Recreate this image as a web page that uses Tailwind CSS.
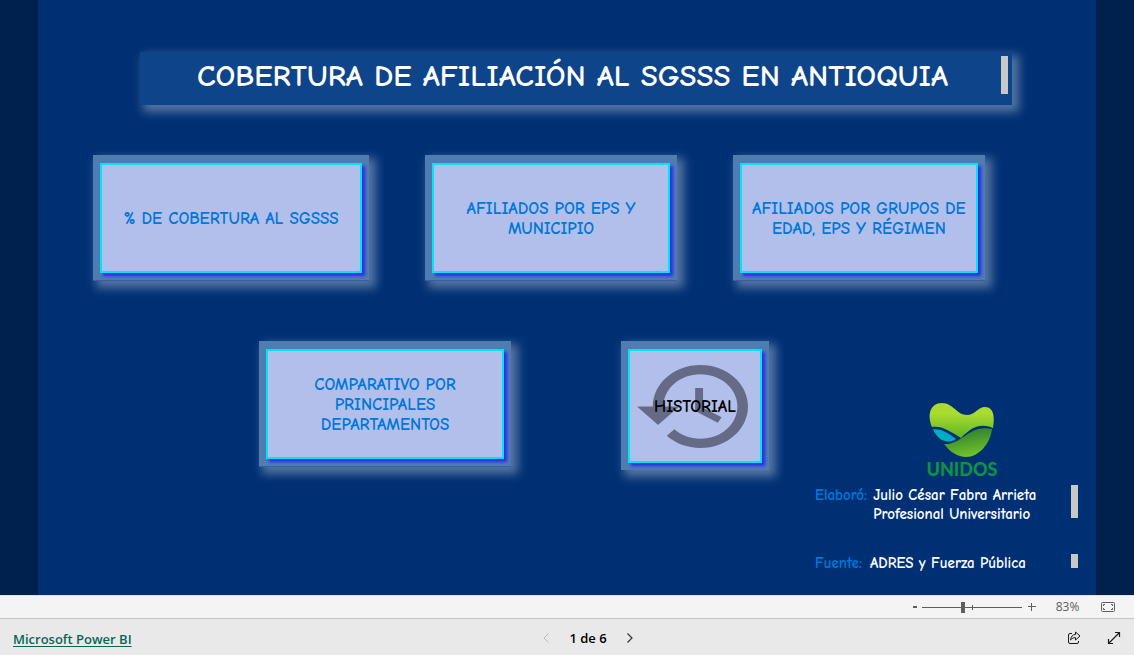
<!DOCTYPE html>
<html lang="es">
<head>
<meta charset="utf-8">
<meta name="viewport" content="width=device-width, initial-scale=1">
<title>Cobertura de afiliación al SGSSS en Antioquia</title>
<script src="https://cdn.jsdelivr.net/npm/@tailwindcss/browser@4"></script>
</head>
<body class="flex min-h-screen flex-col bg-[#00204e] font-['Open_Sans','Noto_Sans',sans-serif]">

<!-- Report page -->
<main class="mx-[38px] flex-1 bg-[#003074] pt-[52px] font-['Comic_Sans_MS','Comic_Neue','Noto_Sans',sans-serif]">
  <header class="mr-[84px] ml-[102px] flex h-[53px] items-start bg-[#0e448a] pt-1 pr-1 shadow-[5px_5px_9px_2px_rgba(255,255,255,0.33)]">
    <h1 class="flex-1 pl-1 text-center text-[31px] leading-[40px] font-bold whitespace-nowrap text-white">COBERTURA DE AFILIACIÓN AL SGSSS EN ANTIOQUIA</h1>
    <span class="h-[38px] w-[7px] bg-[#c8c8c8]"></span>
  </header>

  <nav class="mt-[50px] mr-[111px] ml-[55px] grid grid-cols-[276fr_251fr_252fr] gap-14 text-[17px] leading-[20px] font-bold text-[#0078d8]">
    <div class="h-[126px] border-b border-[#33629e] bg-[#4f7db2] p-[7px] pt-2 shadow-[5px_5px_9px_2px_rgba(255,255,255,0.33)]">
      <button class="size-full border-2 border-[#00e5f5] bg-[#b3bfeb] px-2 pt-[2px] shadow-[3px_3px_3px_#2a2aee]">% DE COBERTURA AL SGSSS</button>
    </div>
    <div class="h-[126px] border-b border-[#33629e] bg-[#4f7db2] p-[7px] pt-2 shadow-[5px_5px_9px_2px_rgba(255,255,255,0.33)]">
      <button class="size-full border-2 border-[#00e5f5] bg-[#b3bfeb] px-2 pt-[2px] shadow-[3px_3px_3px_#2a2aee]">AFILIADOS POR EPS Y<br>MUNICIPIO</button>
    </div>
    <div class="h-[126px] border-b border-[#33629e] bg-[#4f7db2] p-[7px] pt-2 shadow-[5px_5px_9px_2px_rgba(255,255,255,0.33)]">
      <button class="size-full border-2 border-[#00e5f5] bg-[#b3bfeb] px-2 pt-[2px] shadow-[3px_3px_3px_#2a2aee]">AFILIADOS POR GRUPOS DE<br>EDAD, EPS Y RÉGIMEN</button>
    </div>
  </nav>

  <div class="mt-[60px] flex justify-between pr-[18px] pl-[221px]">
    <div class="flex items-start gap-[110px] text-[17px] leading-[20px] font-bold text-[#0078d8]">
      <div class="h-[126px] w-[252px] border-b border-[#33629e] bg-[#4f7db2] p-[7px] pt-2 shadow-[5px_5px_9px_2px_rgba(255,255,255,0.33)]">
        <button class="size-full border-2 border-[#00e5f5] bg-[#b3bfeb] px-2 pt-[2px] shadow-[3px_3px_3px_#2a2aee]">COMPARATIVO POR<br>PRINCIPALES<br>DEPARTAMENTOS</button>
      </div>
      <div class="h-[129px] w-[148px] bg-[#4f7db2] p-[7px] pt-2 shadow-[5px_5px_9px_2px_rgba(255,255,255,0.33)]">
        <button class="grid size-full place-items-center border-2 border-[#00e5f5] bg-[#b3bfeb] pr-[6px] text-black shadow-[3px_3px_3px_#2a2aee]">
          <svg class="col-start-1 row-start-1 h-[83px] w-[111px]" viewBox="1 3 21 18" preserveAspectRatio="none" fill="#656b86" aria-hidden="true"><path d="M13 3c-4.97 0-9 4.03-9 9H1l3.89 3.89.07.14L9 12H6c0-3.87 3.13-7 7-7s7 3.13 7 7-3.13 7-7 7c-1.93 0-3.68-.79-4.94-2.06l-1.42 1.42C8.27 19.99 10.51 21 13 21c4.97 0 9-4.03 9-9s-4.03-9-9-9zm-1 5v5l4.28 2.54.72-1.21-3.5-2.08V8H12z"/></svg>
          <span class="col-start-1 row-start-1 pt-[2px] pl-[6px]">HISTORIAL</span>
        </button>
      </div>
    </div>

    <aside class="w-[263px] pt-[60px] text-[15px] leading-[19px] font-bold text-white">
      <svg class="ml-[110px] h-[76px] w-[74px] overflow-visible" viewBox="0 0 74 76" role="img" aria-label="Unidos">
        <defs>
          <linearGradient id="leaf" x1="0" y1="0" x2="0" y2="1"><stop offset=".3" stop-color="#aadb30"/><stop offset="1" stop-color="#5db526"/></linearGradient>
          <linearGradient id="hill" x1="0.3" y1="0" x2="0.6" y2="1"><stop offset=".2" stop-color="#38892f"/><stop offset="1" stop-color="#76c62a"/></linearGradient>
          <linearGradient id="lake" x1="0" y1="1" x2="1" y2="0"><stop offset="0" stop-color="#00bfa0"/><stop offset="1" stop-color="#0099ea"/></linearGradient>
        </defs>
        <path fill="url(#leaf)" d="M7 26C2 14 5 2 17 2c11 0 15 12 25 12C50 14 53 6 60 6c9 0 10 11 8 21-13-5-21-1-32 10C26 31 17 24 7 26Z"/>
        <path fill="url(#lake)" d="M8 28.500c9-1 15 4 23 9.500-7 5-17 3-23-9.500Z"/>
        <path fill="url(#hill)" d="M19 43c19 1 24-20 48-15C65 43 54 56 41 56 33 56 25 51 19 43Z"/>
        <text x="37" y="75" text-anchor="middle" font-family="Lato, sans-serif" font-weight="900" font-size="18" fill="#0a9444">UNIDOS</text>
      </svg>
      <div class="mt-2 flex items-start justify-between">
        <p class="grid grid-cols-[auto_auto] gap-x-1.5 pt-px whitespace-nowrap"><span class="text-[#0078d8]">Elaboró:</span><span>Julio César Fabra Arrieta</span><span class="col-start-2">Profesional Universitario</span></p>
        <span class="h-[33px] w-[7px] bg-[#c8c8c8]"></span>
      </div>
      <div class="mt-[30px] flex items-start justify-between">
        <p class="whitespace-nowrap"><span class="mr-2 text-[#0078d8]">Fuente:</span>ADRES y Fuerza Pública<span class="text-[#00204e]">.</span></p>
        <span class="h-[14px] w-[7px] bg-[#c8c8c8]"></span>
      </div>
    </aside>
  </div>
</main>

<!-- Zoom bar -->
<div class="flex h-6 items-center justify-end border-t border-b border-t-[#e4e4e4] border-b-[#c4c4c4] bg-[#f4f4f4] pr-[19px] text-[#605e5c]">
  <button class="flex h-4 w-[10px] items-center justify-center" aria-label="Alejar"><span class="h-[2px] w-1 bg-[#605e5c]"></span></button>
  <div class="mx-[2px] flex">
    <svg class="h-3 w-[100px]" viewBox="0 0 100 12" fill="#605e5c" role="img" aria-label="Zoom 83%"><path d="M0 6h100v1H0zM50 4h1v5h-1zM39 1h4v11h-4z"/></svg>
  </div>
  <button class="flex h-4 w-4 items-center justify-center" aria-label="Acercar"><svg class="size-2" viewBox="0 0 8 8" fill="#605e5c"><path d="M3 0h1v3h4v1H4v4H3V4H0V3h3z"/></svg></button>
  <span class="w-[55px] text-center text-[12px] leading-[16px]">83%</span>
  <button class="ml-1.5" aria-label="Ajustar a la página"><svg class="h-[10px] w-[14px]" viewBox="0 0 14 10" fill="none" stroke="#605e5c"><rect x=".5" y=".5" width="13" height="9" rx="1"/><path d="M2.5 4V2.500H4M10 2.500h1.500V4M11.500 6v1.500H10M4 7.500H2.500V6"/></svg></button>
</div>

<!-- Footer -->
<footer class="grid h-9 grid-cols-3 items-center bg-[#e9e9e9] px-[13px] pt-[2px] text-[13px] leading-[20px]">
  <a href="#" class="justify-self-start pt-[2px] font-semibold text-[#0b6557] underline underline-offset-2">Microsoft Power BI</a>
  <div class="flex items-center justify-center gap-5 pl-[42px] text-black">
    <button aria-label="Página anterior"><svg class="h-[10px] w-[6px]" viewBox="0 0 6 10" fill="none" stroke="#b8b8b8"><path d="M5.500.5 1 5l4.500 4.500"/></svg></button>
    <span class="font-semibold">1 de 6</span>
    <button aria-label="Página siguiente"><svg class="h-[10px] w-[6px]" viewBox="0 0 6 10" fill="none" stroke="#333" stroke-width="1.200"><path d="M.5.5 5 5 .5 9.500"/></svg></button>
  </div>
  <div class="flex items-center gap-[26px] justify-self-end">
    <button aria-label="Compartir"><svg class="size-[14px]" viewBox="0 0 14 14" fill="none" stroke="#1b1b1b" stroke-linejoin="round"><path d="M5 2.500H3A1.500 1.500 0 0 0 1.500 4v7A1.500 1.500 0 0 0 3 12.500h7a1.500 1.500 0 0 0 1.500-1.500v-1"/><path d="M8.500 1v2.500C5.500 3.700 4 5.500 3.500 9 5 7.300 6.500 6.600 8.500 6.600V9L13 5Z"/></svg></button>
    <button aria-label="Pantalla completa"><svg class="size-[14px]" viewBox="0 0 14 14" fill="none" stroke="#1b1b1b" stroke-width="1.200"><path d="M1.500 12.500l11-11M8 1.500h4.500V6M1.500 8v4.500H6"/></svg></button>
  </div>
</footer>
</body>
</html>
